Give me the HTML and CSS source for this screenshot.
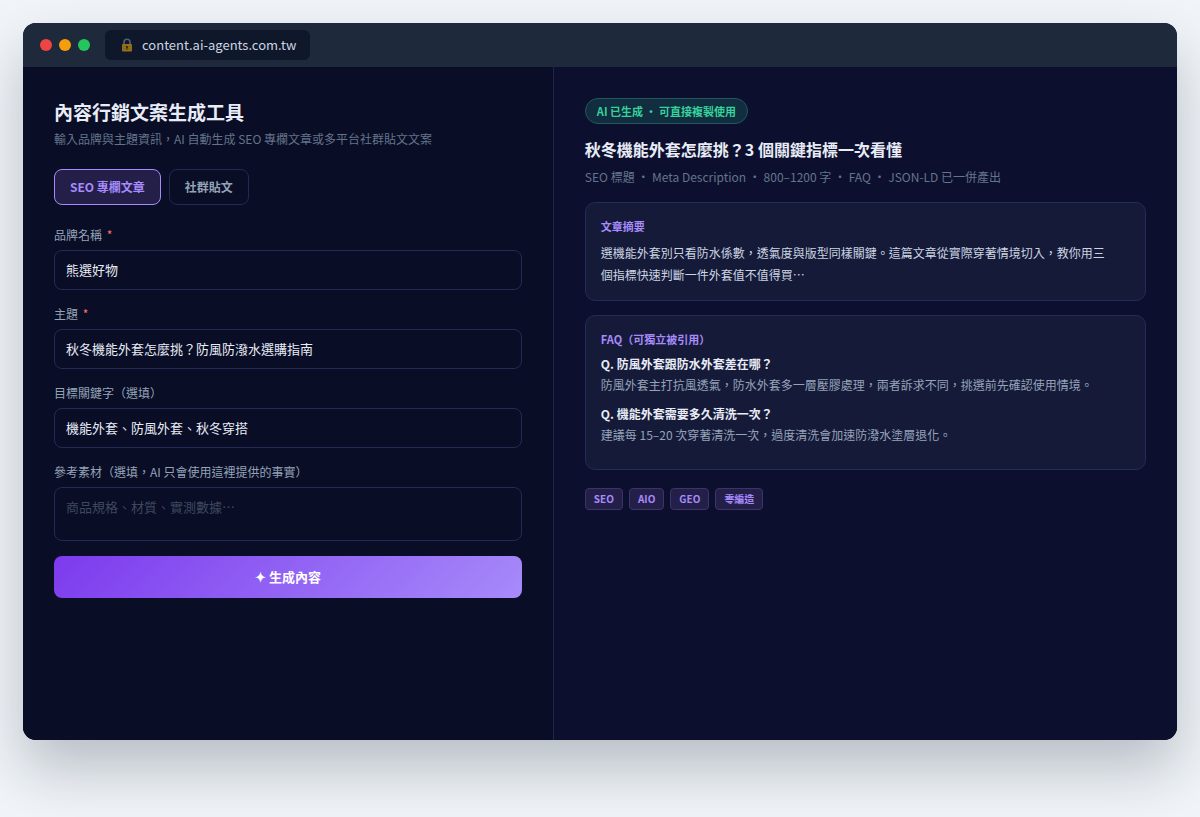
FILE: index.html
```html
<!DOCTYPE html>
<html lang="zh-Hant-TW">
<head>
<meta charset="utf-8">
<meta name="viewport" content="width=device-width, initial-scale=1">
<title>內容行銷文案生成工具</title>
<link rel="stylesheet" href="styles.css">
</head>
<body>
<div class="window">
  <header class="titlebar">
    <div class="dots">
      <span class="dot dot-red"></span>
      <span class="dot dot-amber"></span>
      <span class="dot dot-green"></span>
    </div>
    <div class="address">
      <svg class="lock" viewBox="0 0 12 14" aria-hidden="true">
        <path d="M3 7V4.2a3 3 0 0 1 6 0V7" fill="none" stroke="#4b6470" stroke-width="1.6"/>
        <rect x="1" y="6" width="10" height="7.5" rx="1" fill="#94701c"/>
        <path d="M1.5 8.5h9M1.5 11h9" stroke="#7d5c14" stroke-width=".7"/>
        <circle cx="6" cy="9" r="1.1" fill="#2b2416"/>
        <path d="M6 9v2.6" stroke="#2b2416" stroke-width="1"/>
      </svg>
      <span>content.ai-agents.com.tw</span>
    </div>
  </header>
  <div class="panes">
    <main class="pane pane-form">
      <h1 class="title">內容行銷文案生成工具</h1>
      <p class="subtitle">輸入品牌與主題資訊，AI 自動生成 SEO 專欄文章或多平台社群貼文文案</p>
      <div class="tabs">
        <button type="button" class="tab tab-active">SEO 專欄文章</button>
        <button type="button" class="tab">社群貼文</button>
      </div>
      <form class="form">
        <div class="field">
          <label for="brand">品牌名稱 <span class="required">*</span></label>
          <input class="control" id="brand" type="text" value="熊選好物">
        </div>
        <div class="field">
          <label for="topic">主題 <span class="required">*</span></label>
          <input class="control" id="topic" type="text" value="秋冬機能外套怎麼挑？防風防潑水選購指南">
        </div>
        <div class="field">
          <label for="keywords">目標關鍵字（選填）</label>
          <input class="control" id="keywords" type="text" value="機能外套、防風外套、秋冬穿搭">
        </div>
        <div class="field">
          <label for="material">參考素材（選填，AI 只會使用這裡提供的事實）</label>
          <textarea class="control control-area" id="material" placeholder="商品規格、材質、實測數據⋯"></textarea>
        </div>
        <button type="button" class="submit">✦ 生成內容</button>
      </form>
    </main>
    <section class="pane pane-result">
      <span class="badge">AI 已生成 · 可直接複製使用</span>
      <h2 class="article-title">秋冬機能外套怎麼挑？3 個關鍵指標一次看懂</h2>
      <p class="meta">SEO 標題 · Meta Description · 800–1200 字 · FAQ · JSON-LD 已一併產出</p>
      <article class="card">
        <h3 class="card-title">文章摘要</h3>
        <p class="summary">選機能外套別只看防水係數，透氣度與版型同樣關鍵。這篇文章從實際穿著情境切入，教你用三個指標快速判斷一件外套值不值得買⋯</p>
      </article>
      <article class="card">
        <h3 class="card-title">FAQ（可獨立被引用）</h3>
        <dl class="faq">
          <dt>Q. 防風外套跟防水外套差在哪？</dt>
          <dd>防風外套主打抗風透氣，防水外套多一層壓膠處理，兩者訴求不同，挑選前先確認使用情境。</dd>
          <dt>Q. 機能外套需要多久清洗一次？</dt>
          <dd>建議每 15–20 次穿著清洗一次，過度清洗會加速防潑水塗層退化。</dd>
        </dl>
      </article>
      <ul class="tags">
        <li>SEO</li>
        <li>AIO</li>
        <li>GEO</li>
        <li>零編造</li>
      </ul>
    </section>
  </div>
</div>
</body>
</html>
```
FILE: styles.css
```css
* {
  box-sizing: border-box;
}

body {
  margin: 0;
  min-height: 100vh;
  padding: 23px 23px 77px;
  display: flex;
  flex-direction: column;
  background: #f1f5f9;
  color: #e8ecf6;
  font-family: "Noto Sans CJK TC", sans-serif;
  font-size: 12px;
  line-height: 18px;
}

h1, h2, h3, p, dl, dd, ul {
  margin: 0;
}

button, input, textarea {
  font: inherit;
}

.window {
  flex: 1;
  display: flex;
  flex-direction: column;
  border-radius: 13px;
  overflow: hidden;
  background: #0a0e27;
  box-shadow: 0 29px 58px rgba(15, 23, 42, 0.25);
}

.titlebar {
  display: flex;
  align-items: center;
  gap: 15px;
  padding: 7px 17px;
  background: #1e293b;
}

.dots {
  display: flex;
  gap: 7px;
}

.dot {
  width: 12px;
  height: 12px;
  border-radius: 50%;
}

.dot-red { background: #ef4444; }
.dot-amber { background: #f59e0b; }
.dot-green { background: #22c55e; }

.address {
  display: flex;
  align-items: center;
  gap: 9px;
  padding: 6px 14px 6px 16px;
  border-radius: 6px;
  background: #0f172a;
  color: #cbd5e1;
  font-size: 13px;
}

.lock {
  width: 12px;
  height: 14px;
}

.panes {
  flex: 1;
  display: grid;
  grid-template-columns: 46fr 54fr;
}

.pane {
  padding: 31px;
  min-width: 0;
}

.pane-form {
  border-right: 1px solid #1e2450;
  background: #090d25;
}

.pane-result {
  display: flex;
  flex-direction: column;
  background: #0c102e;
}

.title {
  font-size: 19px;
  line-height: 28px;
  font-weight: 700;
}

.subtitle {
  margin-top: 4px;
  color: #64748b;
}

.tabs {
  display: flex;
  gap: 8px;
  margin: 21px 0;
}

.tab {
  padding: 8px 15px;
  border: 1px solid #252850;
  border-radius: 8px;
  background: transparent;
  color: #94a3b8;
  font-weight: 700;
}

.tab-active {
  border-color: #a78bfa;
  background: #231f49;
  color: #a78bfa;
}

.form {
  display: flex;
  flex-direction: column;
  gap: 15px;
}

.field {
  display: flex;
  flex-direction: column;
  gap: 6px;
  color: #94a3b8;
}

.required {
  margin-left: 2px;
  color: #f87171;
}

.control {
  width: 100%;
  height: 40px;
  padding: 0 11px 2px;
  border: 1px solid #252a58;
  border-radius: 8px;
  background: #090d25;
  color: #e8ecf6;
  font-size: 13px;
}

.control-area {
  display: block;
  height: 54px;
  padding: 10px 11px;
  resize: none;
}

.control::placeholder {
  color: #3d495d;
}

.submit {
  padding: 12px;
  border: 0;
  border-radius: 8px;
  background: linear-gradient(135deg, #7c3aed, #a78bfa);
  color: #fff;
  font-size: 13px;
  font-weight: 700;
}

.badge {
  align-self: flex-start;
  padding: 3px 11px;
  border: 1px solid #1c5b59;
  border-radius: 13px;
  background: #122c40;
  color: #34d399;
  font-size: 11px;
  font-weight: 700;
}

.article-title {
  margin-top: 13px;
  font-size: 16px;
  line-height: 24px;
  font-weight: 700;
}

.meta {
  margin: 7px 0 16px;
  color: #64748b;
}

.card {
  margin-bottom: 14px;
  padding: 14px 15px;
  border: 1px solid #252a58;
  border-radius: 10px;
  background: #161a39;
}

.card-title {
  margin-bottom: 7px;
  color: #a78bfa;
  font-size: 11px;
  line-height: 18px;
  font-weight: 700;
}

.summary {
  padding-right: 16px;
  color: #cbd5e1;
  line-height: 22px;
}

.faq dt {
  font-weight: 700;
}

.faq dd {
  margin: 2px 0 10px;
  color: #94a3b8;
  line-height: 20px;
}

.tags {
  display: flex;
  gap: 6px;
  margin-top: 4px;
  padding: 0;
  list-style: none;
}

.tags li {
  padding: 1px 8px;
  border: 1px solid #3a3468;
  border-radius: 4px;
  background: #231f49;
  color: #a78bfa;
  font-size: 10px;
  font-weight: 700;
}
```
